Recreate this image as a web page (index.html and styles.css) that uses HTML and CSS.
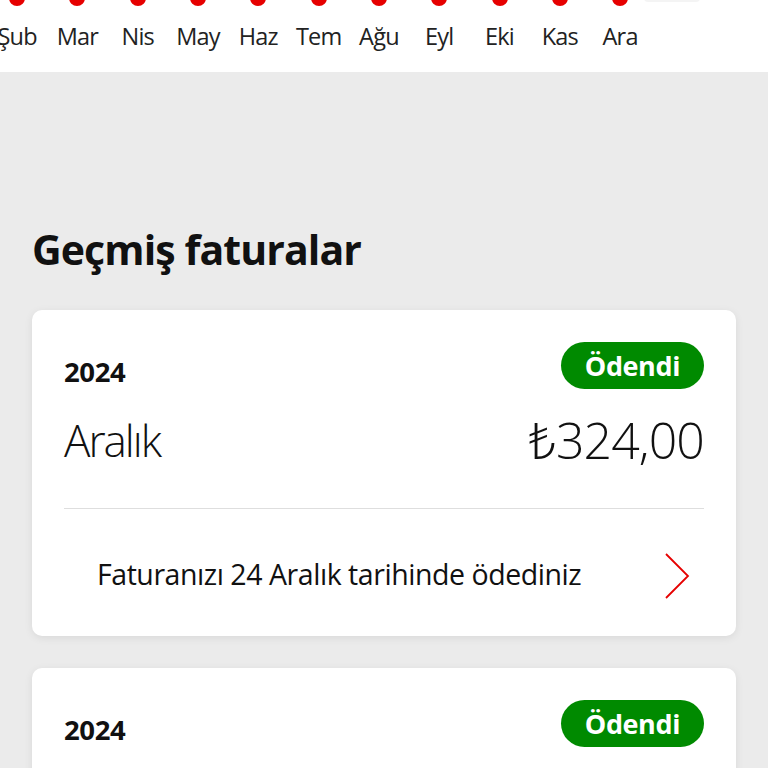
FILE: index.html
```html
<!DOCTYPE html>
<html lang="tr">
<head>
<meta charset="utf-8">
<link rel="stylesheet" href="styles.css">
</head>
<body>
<div class="timeline">
  <div class="months">
    <div class="month"><span class="dot"></span><span class="lbl">Şub</span></div>
    <div class="month"><span class="dot"></span><span class="lbl">Mar</span></div>
    <div class="month"><span class="dot"></span><span class="lbl">Nis</span></div>
    <div class="month"><span class="dot"></span><span class="lbl">May</span></div>
    <div class="month"><span class="dot"></span><span class="lbl">Haz</span></div>
    <div class="month"><span class="dot"></span><span class="lbl">Tem</span></div>
    <div class="month"><span class="dot"></span><span class="lbl">Ağu</span></div>
    <div class="month"><span class="dot"></span><span class="lbl">Eyl</span></div>
    <div class="month"><span class="dot"></span><span class="lbl">Eki</span></div>
    <div class="month"><span class="dot"></span><span class="lbl">Kas</span></div>
    <div class="month"><span class="dot"></span><span class="lbl">Ara</span></div>
    <div class="month"><span class="ghost"></span><span class="lbl"></span></div>
  </div>
</div>
<main class="content">
  <h2 class="title">Geçmiş faturalar</h2>
  <section class="card">
    <div class="row top">
      <span class="year">2024</span>
      <span class="badge">Ödendi</span>
    </div>
    <div class="row mid">
      <span class="month-name">Aralık</span>
      <span class="amount">₺324,00</span>
    </div>
    <div class="divider"></div>
    <div class="row foot">
      <span class="note">Faturanızı 24 Aralık tarihinde ödediniz</span>
      <svg class="chev" width="26" height="46" viewBox="0 0 26 46"><path d="M2 1 L24 23 L2 45" fill="none" stroke="#e60000" stroke-width="1.8"/></svg>
    </div>
  </section>
  <section class="card">
    <div class="row top">
      <span class="year">2024</span>
      <span class="badge">Ödendi</span>
    </div>
  </section>
</main>
</body>
</html>
```
FILE: styles.css
```css
* { box-sizing: border-box; }
html, body { margin: 0; padding: 0; }
body {
  background: #ebebeb;
  font-family: "Open Sans", "Noto Sans", sans-serif;
  color: #111;
  width: 768px;
  height: 768px;
  overflow: hidden;
}
.timeline {
  background: #fff;
  height: 72px;
  overflow: hidden;
}
.months {
  display: flex;
  margin-left: -13px;
}
.month {
  width: 60.3px;
  flex: none;
  display: flex;
  flex-direction: column;
  align-items: center;
}
.dot {
  width: 16px;
  height: 16px;
  border-radius: 50%;
  background: #e60000;
  margin-top: -10px;
}
.ghost {
  width: 56px;
  height: 8px;
  border-radius: 4px;
  background: #f4f4f4;
  margin-top: -6px;
  margin-right: 16px;
}
.lbl {
  margin-top: 15px;
  font-size: 23.5px;
  line-height: 30px;
  letter-spacing: -0.8px;
  color: #222;
}
.content {
  padding: 151px 32px 0 32px;
}
.title {
  margin: 0 0 35px 0;
  font-size: 41px;
  line-height: 52px;
  font-weight: 700;
  letter-spacing: -0.9px;
  color: #111;
}
.card {
  background: #fff;
  border-radius: 10px;
  box-shadow: 0 2px 8px rgba(0,0,0,0.08);
  padding: 32px 32px 0 32px;
  margin-bottom: 32px;
  height: 326px;
}
.row {
  display: flex;
  justify-content: space-between;
  align-items: center;
}
.top { height: 47px; }
.year {
  font-size: 27.5px;
  font-weight: 700;
  letter-spacing: -0.4px;
  padding-top: 12px;
}
.badge {
  background: #008a00;
  color: #fff;
  font-weight: 700;
  font-size: 27px;
  letter-spacing: -0.4px;
  height: 47px;
  line-height: 47px;
  padding: 0 24px;
  border-radius: 24px;
}
.mid { height: 76px; margin-top: 13px; }
.month-name {
  font-size: 44px;
  font-weight: 300;
  letter-spacing: -2px;
}
.amount {
  font-size: 50px;
  font-weight: 300;
  letter-spacing: -0.9px;
}
.divider {
  height: 1px;
  background: #dedede;
  margin-top: 30px;
}
.foot {
  height: 133px;
  padding: 0 14px 0 33px;
}
.note {
  font-size: 28.5px;
  font-weight: 400;
  letter-spacing: -0.45px;
  padding-bottom: 3px;
}
.chev { display: block; }
```
